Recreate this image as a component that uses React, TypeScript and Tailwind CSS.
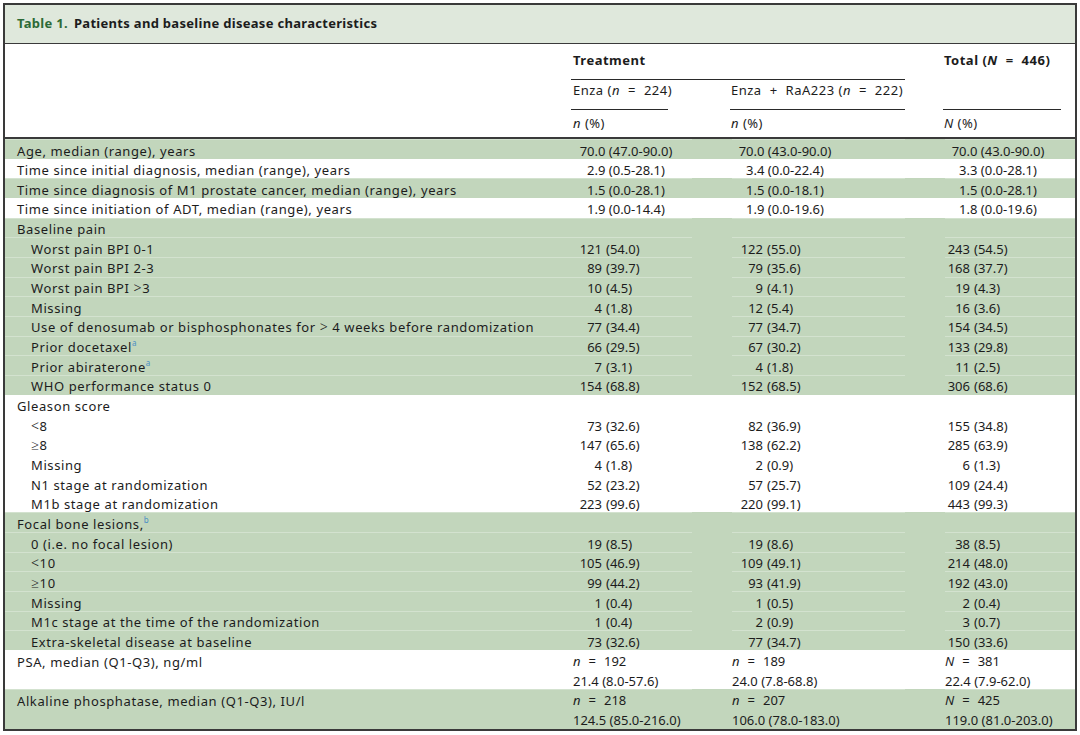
import React from "react";

type Kind = "c" | "np" | "two" | "none";

interface Row {
  label: React.ReactNode;
  sub?: boolean;
  kind: Kind;
  v?: string[];
  two?: [React.ReactNode, string][];
  green: boolean;
}

const Sup = ({ c }: { c: string }) => (
  <span className="relative -top-[6px] text-[8px] leading-none text-[#4b8fc4] tracking-normal">{c}</span>
);

const It = ({ c }: { c: string }) => <span className="italic">{c}</span>;
const Eq = () => <span className="mx-[8px]">=</span>;
const Gt = () => <span className="text-[14px] font-light">&gt;</span>;
const Lt = () => <span className="text-[14px] font-light">&lt;</span>;
const Ge = () => <span className="text-[14px] font-light">≥</span>;

const rows: Row[] = [
  { label: "Age, median (range), years", kind: "c", v: ["70.0 (47.0-90.0)", "70.0 (43.0-90.0)", "70.0 (43.0-90.0)"], green: true },
  { label: "Time since initial diagnosis, median (range), years", kind: "c", v: ["2.9 (0.5-28.1)", "3.4 (0.0-22.4)", "3.3 (0.0-28.1)"], green: false },
  { label: "Time since diagnosis of M1 prostate cancer, median (range), years", kind: "c", v: ["1.5 (0.0-28.1)", "1.5 (0.0-18.1)", "1.5 (0.0-28.1)"], green: true },
  { label: "Time since initiation of ADT, median (range), years", kind: "c", v: ["1.9 (0.0-14.4)", "1.9 (0.0-19.6)", "1.8 (0.0-19.6)"], green: false },
  { label: "Baseline pain", kind: "none", green: true },
  { label: "Worst pain BPI 0-1", sub: true, kind: "np", v: ["121 (54.0)", "122 (55.0)", "243 (54.5)"], green: true },
  { label: "Worst pain BPI 2-3", sub: true, kind: "np", v: ["89 (39.7)", "79 (35.6)", "168 (37.7)"], green: true },
  { label: <>Worst pain BPI <Gt />3</>, sub: true, kind: "np", v: ["10 (4.5)", "9 (4.1)", "19 (4.3)"], green: true },
  { label: "Missing", sub: true, kind: "np", v: ["4 (1.8)", "12 (5.4)", "16 (3.6)"], green: true },
  { label: <>Use of denosumab or bisphosphonates for <Gt /> 4 weeks before randomization</>, sub: true, kind: "np", v: ["77 (34.4)", "77 (34.7)", "154 (34.5)"], green: true },
  { label: <>Prior docetaxel<Sup c="a" /></>, sub: true, kind: "np", v: ["66 (29.5)", "67 (30.2)", "133 (29.8)"], green: true },
  { label: <>Prior abiraterone<Sup c="a" /></>, sub: true, kind: "np", v: ["7 (3.1)", "4 (1.8)", "11 (2.5)"], green: true },
  { label: "WHO performance status 0", sub: true, kind: "np", v: ["154 (68.8)", "152 (68.5)", "306 (68.6)"], green: true },
  { label: "Gleason score", kind: "none", green: false },
  { label: <><Lt />8</>, sub: true, kind: "np", v: ["73 (32.6)", "82 (36.9)", "155 (34.8)"], green: false },
  { label: <><Ge />8</>, sub: true, kind: "np", v: ["147 (65.6)", "138 (62.2)", "285 (63.9)"], green: false },
  { label: "Missing", sub: true, kind: "np", v: ["4 (1.8)", "2 (0.9)", "6 (1.3)"], green: false },
  { label: "N1 stage at randomization", sub: true, kind: "np", v: ["52 (23.2)", "57 (25.7)", "109 (24.4)"], green: false },
  { label: "M1b stage at randomization", sub: true, kind: "np", v: ["223 (99.6)", "220 (99.1)", "443 (99.3)"], green: false },
  { label: <>Focal bone lesions,<Sup c="b" /></>, kind: "none", green: true },
  { label: "0 (i.e. no focal lesion)", sub: true, kind: "np", v: ["19 (8.5)", "19 (8.6)", "38 (8.5)"], green: true },
  { label: <><Lt />10</>, sub: true, kind: "np", v: ["105 (46.9)", "109 (49.1)", "214 (48.0)"], green: true },
  { label: <><Ge />10</>, sub: true, kind: "np", v: ["99 (44.2)", "93 (41.9)", "192 (43.0)"], green: true },
  { label: "Missing", sub: true, kind: "np", v: ["1 (0.4)", "1 (0.5)", "2 (0.4)"], green: true },
  { label: "M1c stage at the time of the randomization", sub: true, kind: "np", v: ["1 (0.4)", "2 (0.9)", "3 (0.7)"], green: true },
  { label: "Extra-skeletal disease at baseline", sub: true, kind: "np", v: ["73 (32.6)", "77 (34.7)", "150 (33.6)"], green: true },
  {
    label: "PSA, median (Q1-Q3), ng/ml",
    kind: "two",
    two: [
      [<><It c="n" /><Eq />192</>, "21.4 (8.0-57.6)"],
      [<><It c="n" /><Eq />189</>, "24.0 (7.8-68.8)"],
      [<><It c="N" /><Eq />381</>, "22.4 (7.9-62.0)"],
    ],
    green: false,
  },
  {
    label: "Alkaline phosphatase, median (Q1-Q3), IU/l",
    kind: "two",
    two: [
      [<><It c="n" /><Eq />218</>, "124.5 (85.0-216.0)"],
      [<><It c="n" /><Eq />207</>, "106.0 (78.0-183.0)"],
      [<><It c="N" /><Eq />425</>, "119.0 (81.0-203.0)"],
    ],
    green: true,
  },
];

// per data column: cell width, inner box offset, line margins, number width
const cols = [
  { cell: "w-[147px]", box: "pl-[8px]", line: "mr-[20px]", num: "w-[29px]" },
  { cell: "w-[213px]", box: "pl-[20px]", line: "mx-[20px]", num: "w-[31px]" },
  { cell: "w-[150px]", box: "pl-[20px]", line: "ml-[20px]", num: "w-[25px]" },
];

function Value({ row, i }: { row: Row; i: number }) {
  const c = cols[i];
  if (row.kind === "none") return null;
  if (row.kind === "two" && row.two) {
    const [a, b] = row.two[i];
    return (
      <div className={`${c.box} leading-[19.66px] -mt-[0.5px] whitespace-nowrap`}>
        <div>{a}</div>
        <div>{b}</div>
      </div>
    );
  }
  const v = row.v![i];
  if (row.kind === "c") {
    return (
      <div className={c.box}>
        <div className="w-[106px] text-center whitespace-nowrap">{v}</div>
      </div>
    );
  }
  const sp = v.indexOf(" ");
  return (
    <div className={`${c.box} flex whitespace-nowrap`}>
      <span className={`${c.num} text-right`}>{v.slice(0, sp)}</span>
      <span className="pl-[4px]">{v.slice(sp + 1)}</span>
    </div>
  );
}

function DataRow({ row }: { row: Row }) {
  const bg = row.green ? "bg-[#c2d6bc]" : "bg-white";
  const line = row.green ? "bg-[#d3e2cf]" : "bg-white";
  const h = row.kind === "two" ? "h-[39.32px]" : "h-[19.66px]";
  return (
    <div className={`flex ${bg} ${h} leading-[18.66px]`}>
      <div className="w-[560px] shrink-0">
        <div className={`h-px ${line}`} />
        <div className={`relative top-[1.5px] tracking-[0.6px] whitespace-nowrap ${row.sub ? "pl-[26px]" : "pl-[12px]"}`}>
          {row.label}
        </div>
      </div>
      {cols.map((c, i) => (
        <div key={i} className={`${c.cell} shrink-0`}>
          <div className={`h-px ${line} ${c.line}`} />
          <div className="relative top-[1.5px]">
            <Value row={row} i={i} />
          </div>
        </div>
      ))}
    </div>
  );
}

export default function App() {
  return (
    <div className="bg-white w-[1080px] h-[735px] pt-[3px] pl-[3px]">
      <div
        className="w-[1074px] border-2 border-[#3a3a3a] text-[13px] leading-[19.66px] text-[#1c1c1c]"
        style={{ fontFamily: '"Noto Sans", "Open Sans", sans-serif' }}
      >
        <div className="h-[39px] bg-[#dfe8dc] border-b border-[#3a3a3a] flex items-center pl-[12px] pb-px font-bold tracking-[0.3px]">
          <span className="text-[#2d6a37]">Table 1.</span>
          <span className="pl-[6px]">Patients and baseline disease characteristics</span>
        </div>

        <div className="flex h-[95px] border-b-2 border-[#3a3a3a] tracking-[0.5px] whitespace-nowrap">
          <div className="w-[560px] shrink-0" />
          <div className="w-[360px] shrink-0 flex flex-col">
            <div className="h-[35px] pt-[7px]">
              <div className="pl-[8px] font-bold">Treatment</div>
            </div>
            <div className="h-px bg-[#2a2a2a] ml-[6px] mr-[20px]" />
            <div className="flex flex-1">
              <div className="w-[147px] flex flex-col">
                <div className="h-[29px] pt-px pl-[8px]">
                  Enza (<It c="n" />
                  <Eq />
                  224)
                </div>
                <div className="h-px bg-[#2a2a2a] ml-[6px] w-[97px]" />
                <div className="pt-[4px] pl-[8px]">
                  <It c="n" /> (%)
                </div>
              </div>
              <div className="w-[213px] flex flex-col">
                <div className="h-[29px] pt-px pl-[19px]">
                  Enza<span className="mx-[8px]">+</span>RaA223 (<It c="n" />
                  <Eq />
                  222)
                </div>
                <div className="h-px bg-[#2a2a2a] ml-[18px] mr-[20px]" />
                <div className="pt-[4px] pl-[19px]">
                  <It c="n" /> (%)
                </div>
              </div>
            </div>
          </div>
          <div className="w-[150px] shrink-0 flex flex-col">
            <div className="h-[65px] pt-[7px] pl-[19px] font-bold">
              Total (<span className="italic">N</span>
              <Eq />
              446)
            </div>
            <div className="h-px bg-[#2a2a2a] ml-[18px] mr-[14px]" />
            <div className="pt-[4px] pl-[19px]">
              <It c="N" /> (%)
            </div>
          </div>
        </div>

        <div>
          {rows.map((r, i) => (
            <DataRow key={i} row={r} />
          ))}
        </div>
      </div>
    </div>
  );
}
